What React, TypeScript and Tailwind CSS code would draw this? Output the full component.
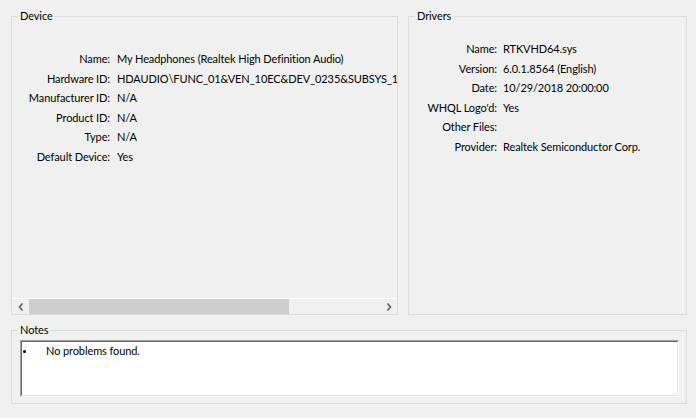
import React from "react";

type Row = { label: string; value: string };

const deviceRows: Row[] = [
  { label: "Name:", value: "My Headphones (Realtek High Definition Audio)" },
  {
    label: "Hardware ID:",
    value: "HDAUDIO\\FUNC_01&VEN_10EC&DEV_0235&SUBSYS_10431F11&REV_1000",
  },
  { label: "Manufacturer ID:", value: "N/A" },
  { label: "Product ID:", value: "N/A" },
  { label: "Type:", value: "N/A" },
  { label: "Default Device:", value: "Yes" },
];

const driverRows: Row[] = [
  { label: "Name:", value: "RTKVHD64.sys" },
  { label: "Version:", value: "6.0.1.8564 (English)" },
  { label: "Date:", value: "10/29/2018 20:00:00" },
  { label: "WHQL Logo'd:", value: "Yes" },
  { label: "Other Files:", value: "" },
  { label: "Provider:", value: "Realtek Semiconductor Corp." },
];

// group box with its caption sitting on the top border
const GroupBox = ({
  title,
  className,
  children,
}: {
  title: string;
  className: string;
  children: React.ReactNode;
}) => (
  <div className={`relative border border-[#dcdcdc] ${className}`}>
    <span className="absolute -top-[9px] left-[6px] bg-[#f0f0f0] px-[2px] leading-4">
      {title}
    </span>
    {children}
  </div>
);

const InfoGrid = ({ rows, labelWidth }: { rows: Row[]; labelWidth: string }) => (
  <div className={`grid ${labelWidth} leading-[19.5px] whitespace-nowrap`}>
    {rows.map((row) => (
      <React.Fragment key={row.label}>
        <span className="text-right">{row.label}</span>
        <span>{row.value}</span>
      </React.Fragment>
    ))}
  </div>
);

const Chevron = ({ dir }: { dir: "left" | "right" }) => (
  <svg width="6" height="8" viewBox="0 0 6 8">
    <path
      d={dir === "left" ? "M4.5 0.5 L1.5 4 L4.5 7.5" : "M1.5 0.5 L4.5 4 L1.5 7.5"}
      fill="none"
      stroke="#606060"
      strokeWidth="1.6"
    />
  </svg>
);

export default function App() {
  return (
    <div
      className="w-[696px] h-[418px] bg-[#f0f0f0] pt-[16px] pl-[11px] text-[11px] tracking-[-0.1px] text-black overflow-hidden"
      style={{ fontFamily: '"Segoe UI", Lato, sans-serif' }}
    >
      <div className="flex">
        <GroupBox title="Device" className="w-[387px] h-[299px] flex flex-col">
          <div className="h-[281px] overflow-hidden pt-[32px]">
            <InfoGrid rows={deviceRows} labelWidth="grid-cols-[98px_1fr] gap-x-[7px]" />
          </div>
          <div className="h-[16px] border-t border-white flex">
            <div className="w-[17px] flex items-center justify-center">
              <Chevron dir="left" />
            </div>
            <div className="flex-1">
              <div className="w-[260px] h-full bg-[#cdcdcd]" />
            </div>
            <div className="w-[17px] flex items-center justify-center">
              <Chevron dir="right" />
            </div>
          </div>
        </GroupBox>
        <GroupBox title="Drivers" className="ml-[10px] w-[279px] h-[299px]">
          <div className="pt-[22px]">
            <InfoGrid rows={driverRows} labelWidth="grid-cols-[88px_1fr] gap-x-[6px]" />
          </div>
        </GroupBox>
      </div>
      <GroupBox title="Notes" className="mt-[15px] w-[676px] h-[74px]">
        <div className="ml-[8px] mt-[9px] w-[659px] h-[57px] border-t border-l border-t-[#a0a0a0] border-l-[#a0a0a0] border-r border-b border-white">
          <div className="h-full bg-white border-t border-l border-t-[#696969] border-l-[#696969] border-r border-b border-r-[#e3e3e3] border-b-[#e3e3e3] pt-[1px]">
            <div className="flex items-center h-4">
              <span className="w-[24px] pl-[1px] flex">
                <span className="w-[3px] h-[3px] rounded-full bg-black" />
              </span>
              <span>No problems found.</span>
            </div>
          </div>
        </div>
      </GroupBox>
    </div>
  );
}
